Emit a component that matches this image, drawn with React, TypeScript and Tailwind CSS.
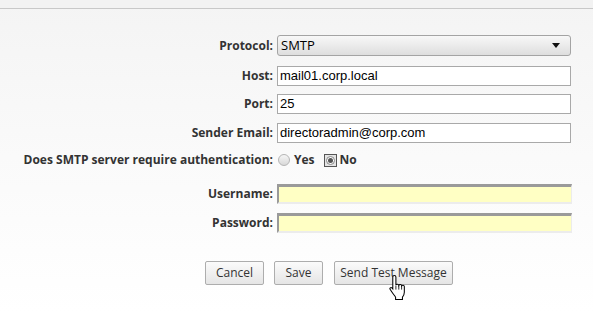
import React from "react";

const labelCls =
  "w-[273px] shrink-0 text-right pr-[0px] font-bold text-[12px] text-[#333] leading-none";
const seg = { fontFamily: '"Open Sans", "Noto Sans", sans-serif' };

function Row({ label, children, className }: { label: string; children: React.ReactNode; className?: string }) {
  return (
    <div className={"flex items-center gap-[4px] " + (className ?? "")}>
      <div className={labelCls} style={seg}>
        {label}
      </div>
      {children}
    </div>
  );
}

function TextBox({ value }: { value: string }) {
  return (
    <div
      className="w-[294px] h-[20px] border border-[#a9a9a9] bg-white flex items-center px-[2px] text-[13px] text-black"
      style={{ fontFamily: '"Liberation Sans", Arial, sans-serif' }}
    >
      {value}
    </div>
  );
}

function YellowBox() {
  return (
    <div className="w-[295px] h-[20px] bg-[#ffffc4] border-t-[3px] border-l-[2px] border-b-[2px] border-r-[1px] border-t-[#9a9a9a] border-l-[#9a9a9a] border-b-[#ececec] border-r-[#ececec]" />
  );
}

function Btn({ children, w }: { children: React.ReactNode; w: string }) {
  return (
    <div
      className={
        "h-[24px] rounded-[2px] border border-[#adadad] bg-gradient-to-b from-[#fbfbfb] to-[#e5e5e5] flex items-center justify-center text-[12px] text-[#333] " +
        w
      }
      style={seg}
    >
      {children}
    </div>
  );
}

export default function App() {
  return (
    <div className="relative w-[593px] h-[313px] overflow-hidden bg-gradient-to-b from-[#f4f4f4] via-[#fafafa] to-white">
      <div className="h-[9px] bg-[#f2f2f2] border-b border-[#c8c8c8]" />
      <div className="flex flex-col">
        <Row label="Protocol:" className="mt-[26px]">
          <div
            className="w-[294px] h-[21px] rounded-[3px] border border-[#a4a4a4] bg-gradient-to-b from-[#f8f8f8] to-[#dedede] flex items-center justify-between pl-[3px] pr-[10px] text-[13px] text-black"
            style={seg}
          >
            <span>SMTP</span>
            <svg width="8" height="5" viewBox="0 0 8 5">
              <path d="M0 0H8L4 5Z" fill="#111" />
            </svg>
          </div>
        </Row>
        <Row label="Host:" className="mt-[10px]">
          <TextBox value="mail01.corp.local" />
        </Row>
        <Row label="Port:" className="mt-[8px]">
          <TextBox value="25" />
        </Row>
        <Row label="Sender Email:" className="mt-[9px]">
          <TextBox value="directoradmin@corp.com" />
        </Row>
        <Row label="Does SMTP server require authentication:" className="mt-[7px] h-[20px]">
          <div className="flex items-center text-[12px] font-bold text-[#333]" style={seg}>
            <span className="w-[12px] h-[12px] rounded-full border border-[#b5b5b5] bg-gradient-to-b from-[#f6f6f6] to-[#d8d8d8] ml-[1px]" />
            <span className="ml-[4px]">Yes</span>
            <span className="ml-[9px] w-[13px] h-[13px] border border-[#555] flex items-center justify-center bg-[#e4e4e4]">
              <span className="w-[9px] h-[9px] rounded-full border border-[#888] bg-white flex items-center justify-center">
                <span className="w-[5px] h-[5px] rounded-full bg-[#555]" />
              </span>
            </span>
            <span className="ml-[3px]">No</span>
          </div>
        </Row>
        <Row label="Username:" className="mt-[14px]">
          <YellowBox />
        </Row>
        <Row label="Password:" className="mt-[9px]">
          <YellowBox />
        </Row>
        <div className="flex items-center mt-[28px] pl-[205px] gap-[10px]">
          <Btn w="w-[59px]">Cancel</Btn>
          <Btn w="w-[49px]">Save</Btn>
          <Btn w="w-[119px] ml-[1px]">Send Test Message</Btn>
        </div>
      </div>
      <svg
        className="absolute left-[389px] top-[274px]"
        width="19"
        height="26"
        viewBox="0 0 18 25"
      >
        <path
          d="M5 1.5c.8 0 1.5.6 1.5 1.5v7.5c.3-.9 2.6-1 2.8.3.4-1 2.6-1 2.8.5.6-.9 2.5-.6 2.5.8v5.4c0 2-.8 3.5-1.8 4.8v2.2H6.2v-2.2C5 20.6 3.8 19 2.8 17.5L.9 14.6c-.6-.9.7-2.2 1.7-1.3l.9 1V3c0-.9.7-1.5 1.5-1.5z"
          fill="#fff"
          stroke="#000"
          strokeWidth="1"
        />
        <path d="M9.3 11v4M12 11.3v3.7M6.5 11v4" stroke="#000" strokeWidth="0.8" />
      </svg>
    </div>
  );
}
